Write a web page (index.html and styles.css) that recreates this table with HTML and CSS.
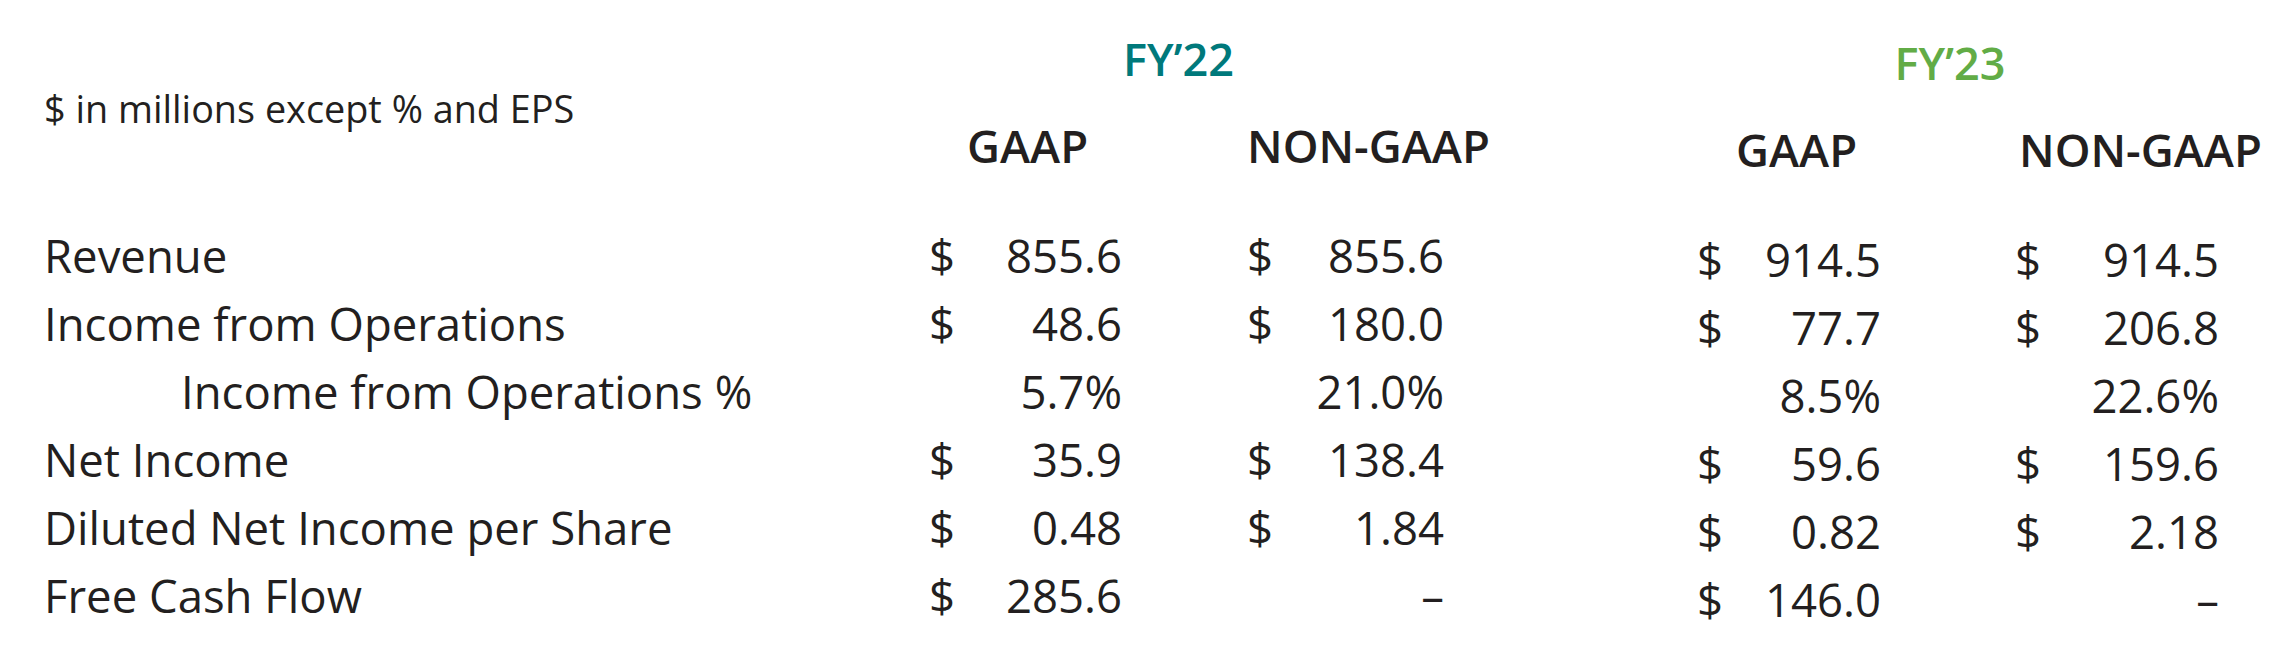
FILE: index.html
```html
<!DOCTYPE html>
<html lang="en">
<head>
<meta charset="utf-8">
<title>Financial summary FY'22 / FY'23</title>
<link rel="stylesheet" href="styles.css">
</head>
<body>
<div class="table">
  <div class="labels">
    <div class="col-head">
      <div class="note">$ in millions except % and EPS</div>
    </div>
    <div class="rows">
      <div class="row">Revenue</div>
      <div class="row">Income from Operations</div>
      <div class="row indent">Income from Operations %</div>
      <div class="row">Net Income</div>
      <div class="row">Diluted Net Income per Share</div>
      <div class="row">Free Cash Flow</div>
    </div>
  </div>

  <div class="year y22">
    <div class="col-head">
      <div class="fy">FY’22</div>
      <div class="sub">
        <div class="sub-g">GAAP</div>
        <div class="sub-n">NON-GAAP</div>
      </div>
    </div>
    <div class="grid">
      <div class="v"><span>$</span><span class="num">855.6</span></div>
      <div class="v"><span>$</span><span class="num">855.6</span></div>
      <div class="v"><span>$</span><span class="num">48.6</span></div>
      <div class="v"><span>$</span><span class="num">180.0</span></div>
      <div class="v"><span class="num">5.7%</span></div>
      <div class="v"><span class="num">21.0%</span></div>
      <div class="v"><span>$</span><span class="num">35.9</span></div>
      <div class="v"><span>$</span><span class="num">138.4</span></div>
      <div class="v"><span>$</span><span class="num">0.48</span></div>
      <div class="v"><span>$</span><span class="num">1.84</span></div>
      <div class="v"><span>$</span><span class="num">285.6</span></div>
      <div class="v"><span class="num">–</span></div>
    </div>
  </div>

  <div class="year y23">
    <div class="col-head">
      <div class="fy">FY’23</div>
      <div class="sub">
        <div class="sub-g">GAAP</div>
        <div class="sub-n">NON-GAAP</div>
      </div>
    </div>
    <div class="grid">
      <div class="v"><span>$</span><span class="num">914.5</span></div>
      <div class="v"><span>$</span><span class="num">914.5</span></div>
      <div class="v"><span>$</span><span class="num">77.7</span></div>
      <div class="v"><span>$</span><span class="num">206.8</span></div>
      <div class="v"><span class="num">8.5%</span></div>
      <div class="v"><span class="num">22.6%</span></div>
      <div class="v"><span>$</span><span class="num">59.6</span></div>
      <div class="v"><span>$</span><span class="num">159.6</span></div>
      <div class="v"><span>$</span><span class="num">0.82</span></div>
      <div class="v"><span>$</span><span class="num">2.18</span></div>
      <div class="v"><span>$</span><span class="num">146.0</span></div>
      <div class="v"><span class="num">–</span></div>
    </div>
  </div>
</div>
</body>
</html>
```

FILE: styles.css
```css
html, body {
  margin: 0;
  padding: 0;
  background: #ffffff;
}

body {
  font-family: "Open Sans", "Liberation Sans", sans-serif;
  color: #231f20;
  font-size: 45.5px;
  font-weight: 400;
}

.table {
  display: flex;
  align-items: flex-start;
  padding: 29px 0 0 44px;
}

.col-head {
  height: 192px;
}

/* ---------- labels column ---------- */
.labels {
  width: 885px;
  flex: none;
}

.note {
  padding-top: 55px;
  font-size: 37.8px;
  line-height: 50px;
  white-space: nowrap;
}

.row {
  line-height: 68px;
  height: 68px;
  white-space: nowrap;
}

.row.indent {
  padding-left: 137px;
}

/* ---------- year blocks ---------- */
.year {
  flex: none;
}

.y22 {
  --c1: 193px;
  --gap: 125px;
  --c2: 197px;
  --g-pad: 38px;
  --n-pad: 0px;
}

.y23 {
  --c1: 184px;
  --gap: 134px;
  --c2: 204px;
  --g-pad: 39px;
  --n-pad: 4px;
  margin-left: 253px;
  padding-top: 4px;
}

.fy {
  font-weight: 600;
  font-size: 45px;
  line-height: 60px;
  height: 60px;
  text-align: center;
  padding-right: 16px;
}

.y22 .fy { color: #00797b; }
.y23 .fy { color: #62ac46; }

.sub {
  display: grid;
  grid-template-columns: var(--c1) var(--c2);
  column-gap: var(--gap);
  margin-top: 26px;
  font-weight: 600;
  font-size: 45.5px;
  line-height: 60px;
  white-space: nowrap;
}

.sub-g { padding-left: var(--g-pad); }
.sub-n { padding-left: var(--n-pad); }

.grid {
  display: grid;
  grid-template-columns: var(--c1) var(--c2);
  column-gap: var(--gap);
  grid-auto-rows: 68px;
  line-height: 68px;
  white-space: nowrap;
}

.v {
  display: flex;
  justify-content: space-between;
}

.v .num {
  margin-left: auto;
}
```
